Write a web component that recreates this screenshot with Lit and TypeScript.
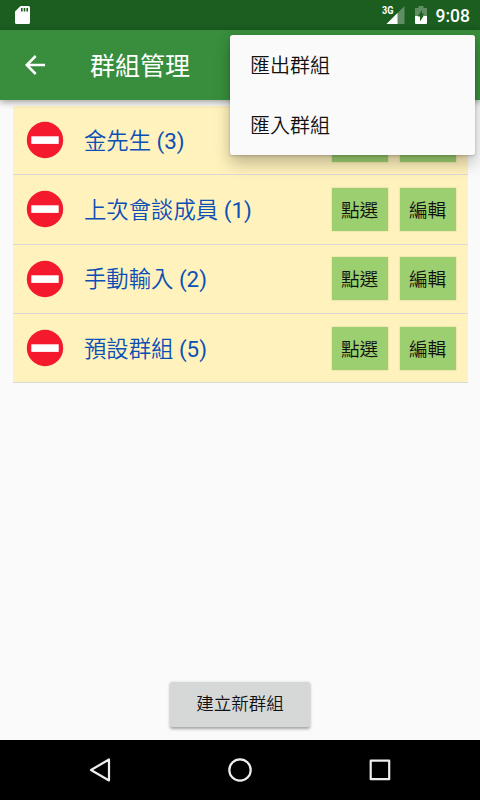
import { LitElement, html, css } from "lit";
import { customElement, property } from "lit/decorators.js";

const FONT = css`Roboto, "Noto Sans CJK TC", sans-serif`;

@customElement("status-bar")
class StatusBar extends LitElement {
  static styles = css`
    :host { display: flex; align-items: flex-start; height: 30px; background: #1b5e20; color: #fff; }
    .sd { margin: 6px 0 0 15px; }
    .gap { flex: 1; }
    .signal { margin-top: 4px; }
    .battery { margin: 6px 0 0 10px; }
    .network { font: 700 10px/10px Roboto, sans-serif; fill: #fff; }
    .time { font: 500 17.5px/30px ${FONT}; margin: 1px 10px 0 8.5px; width: 34.5px; white-space: nowrap; }
    svg { display: block; }
  `;
  render() {
    return html`
      <svg class="sd" width="15" height="18" viewBox="0 0 15 18">
        <path fill="#fff" fill-rule="evenodd" d="M5.5 0H13.5Q15 0 15 1.5V16.5Q15 18 13.5 18H1.5Q0 18 0 16.5V5.5ZM6 2V5.5H7.6V2ZM8.7 2V5.5H10.3V2ZM11.4 2V5.5H13V2Z"/>
      </svg>
      <div class="gap"></div>
      <svg class="signal" width="23" height="21" viewBox="0 0 23 21">
        <path fill="#fff" fill-opacity=".3" d="M4.5 20L22.5 2V20Z"/>
        <path fill="#fff" d="M4.5 20L15.5 9V20Z"/>
        <text class="network" x="0" y="10" textLength="11.5" lengthAdjust="spacingAndGlyphs">3G</text>
      </svg>
      <svg class="battery" width="12" height="18" viewBox="0 0 12 18">
        <path fill="#fff" fill-opacity=".3" d="M3.5 0H8.5V2H12V10H7.5L9 7.5H7V4L3 10H0V2H3.5Z"/>
        <path fill="#fff" d="M0 10H3L2.8 10.5H5V15.5L8.5 10H12V17Q12 18 11 18H1Q0 18 0 17Z"/>
      </svg>
      <div class="time">9:08</div>
    `;
  }
}

@customElement("group-row")
class GroupRow extends LitElement {
  @property() name = "";
  @property({ type: Number }) count = 0;
  static styles = css`
    :host { display: flex; align-items: center; box-sizing: border-box; height: 69.33px;
      padding: 0 12px 0 13.3px; background: #fff2bd; border-bottom: 1px solid #d9d9d6; }
    .icon { display: block; flex: none; margin-bottom: 0.7px; }
    .label { flex: 1; margin-left: 20px; padding-top: 2px; color: #0b4fb6; white-space: nowrap;
      font: 350 22.4px/33px ${FONT}; }
    .digits { font-weight: 400; }
    .action { width: 56px; height: 43px; margin-left: 12px; padding: 3px 0 0; border: 0;
      background: #9ccf70; color: #111; font: 350 18.7px/40px ${FONT};
      box-shadow: 0 0 1.5px rgba(90, 110, 40, .35); }
  `;
  render() {
    return html`
      <svg class="icon" width="38" height="38" viewBox="0 0 38 38">
        <circle cx="19" cy="19" r="18.2" fill="#f4192d"/>
        <rect x="5.3" y="15.3" width="27.4" height="7.6" fill="#fff"/>
      </svg>
      <span class="label">${this.name} <span class="digits">(${this.count})</span></span>
      <button class="action">點選</button>
      <button class="action">編輯</button>
    `;
  }
}

@customElement("app-root")
class AppRoot extends LitElement {
  groups = [
    { name: "金先生", count: 3 },
    { name: "上次會談成員", count: 1 },
    { name: "手動輸入", count: 2 },
    { name: "預設群組", count: 5 },
  ];
  static styles = css`
    :host { display: flex; flex-direction: column; position: relative; width: 480px; height: 800px;
      overflow: hidden; background: #fafafa; font-family: ${FONT}; }
    .toolbar { display: flex; align-items: center; height: 70px; flex: none; background: #388e3c;
      color: #fff; box-shadow: 0 2px 7px rgba(0, 0, 0, .38); z-index: 1; }
    .back { display: block; margin-left: 25px; }
    .title { margin: 3px 0 0 45px; font: 400 25px/37px ${FONT}; }
    .list { margin: 6.1px 12.4px 0 12.6px; }
    .fill { flex: 1; }
    .create { align-self: center; width: 140px; height: 45.5px; margin-bottom: 13px; padding: 0;
      border: 0; border-radius: 2px; background: #d6d8d7; color: #111; font: 350 17.5px/44px ${FONT};
      box-shadow: 0 1.5px 3px rgba(0, 0, 0, .35); }
    .menu { position: absolute; z-index: 2; left: 230px; top: 35px; width: 245px; height: 120px;
      border-radius: 2.5px; background: #fafafa; box-shadow: 0 8px 16px rgba(0, 0, 0, .25), 0 1px 3px rgba(0, 0, 0, .2); }
    .item { height: 60px; padding-left: 20px; color: #111; font: 350 20px/63px ${FONT}; }
    .nav { display: flex; justify-content: center; align-items: center; gap: 116px; flex: none;
      height: 60px; background: #000; }
    .nav svg { display: block; fill: none; stroke: #eee; stroke-width: 2.2; stroke-linejoin: round; }
  `;
  render() {
    return html`
      <status-bar></status-bar>
      <header class="toolbar">
        <svg class="back" width="20" height="20" viewBox="0 0 20 20">
          <path d="M20 10H2M10.7 1L1.7 10L10.7 19" fill="none" stroke="#fff" stroke-width="2.5"/>
        </svg>
        <div class="title">群組管理</div>
      </header>
      <main class="list">
        ${this.groups.map((g) => html`<group-row .name=${g.name} .count=${g.count}></group-row>`)}
      </main>
      <div class="fill"></div>
      <button class="create">建立新群組</button>
      <nav class="nav">
        <svg width="24" height="24" viewBox="0 0 24 24"><path d="M21 1.5V22.5L3 12Z"/></svg>
        <svg width="24" height="24" viewBox="0 0 24 24"><circle cx="12" cy="12" r="10.7"/></svg>
        <svg width="24" height="24" viewBox="0 0 24 24"><rect x="2.7" y="2.7" width="18.5" height="18.5"/></svg>
      </nav>
      <div class="menu">
        <div class="item">匯出群組</div>
        <div class="item">匯入群組</div>
      </div>
    `;
  }
}
